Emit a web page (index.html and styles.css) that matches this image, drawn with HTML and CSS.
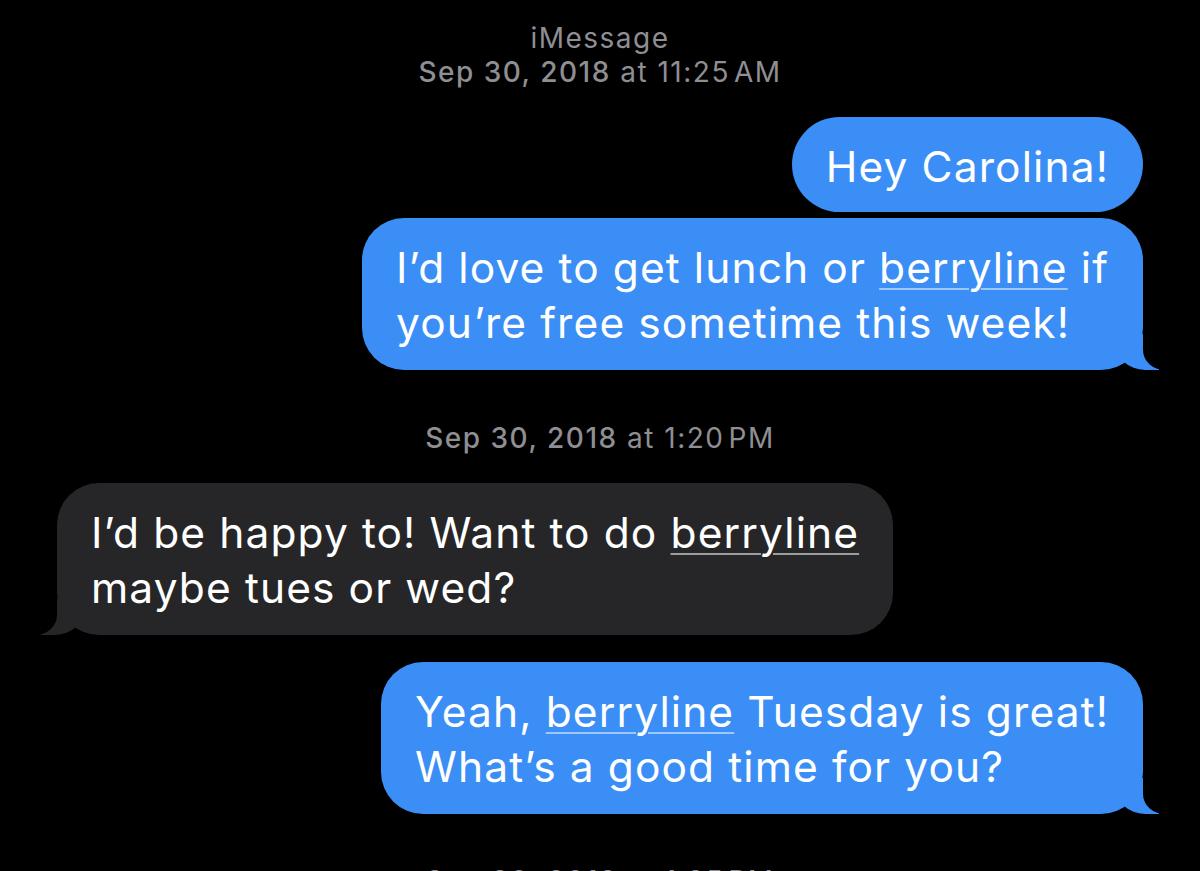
FILE: index.html
```html
<!DOCTYPE html>
<html lang="en">
<head>
<meta charset="utf-8">
<title>iMessage</title>
<link rel="stylesheet" href="styles.css">
</head>
<body>
<main class="thread">
  <header class="stamp stamp-first">
    <div class="service">iMessage</div>
    <div class="time"><span class="date">Sep 30, 2018</span> at 11:25&#8202;AM</div>
  </header>

  <div class="row row-sent">
    <div class="bubble sent single">Hey Carolina!</div>
  </div>
  <div class="row row-sent row-tight">
    <div class="bubble sent tail">I’d love to get lunch or <span class="link">berryline</span> if<br>you’re free sometime this week!</div>
  </div>

  <div class="stamp stamp-mid">
    <div class="time"><span class="date">Sep 30, 2018</span> at 1:20&#8202;PM</div>
  </div>

  <div class="row row-recv">
    <div class="bubble recv tail">I’d be happy to! Want to do <span class="link link-dim">berryline</span><br>maybe tues or wed?</div>
  </div>

  <div class="row row-sent row-gap">
    <div class="bubble sent tail">Yeah, <span class="link">berryline</span> Tuesday is great!<br>What’s a good time for you?</div>
  </div>

  <div class="stamp stamp-last">
    <div class="time"><span class="date">Sep 30, 2018</span> at 1:25&#8202;PM</div>
  </div>
</main>
</body>
</html>
```
FILE: styles.css
```css
* { box-sizing: border-box; }
html, body {
  margin: 0;
  padding: 0;
  background: #000;
  height: 871px;
  overflow: hidden;
}
body {
  font-family: Inter, "Noto Sans", "Liberation Sans", sans-serif;
  color: #fff;
}
.thread {
  display: flex;
  flex-direction: column;
  padding: 21px 57px 0;
}
.stamp {
  text-align: center;
  color: #8e8e93;
  font-size: 28px;
  line-height: 34px;
  letter-spacing: 1.5px;
}
.stamp .date { font-weight: 500; }
.stamp-first { margin-bottom: 28px; }
.stamp-mid { margin: 51px 0 28px; }
.stamp-last { margin-top: 50px; }

.row { display: flex; }
.row-sent { justify-content: flex-end; }
.row-recv { justify-content: flex-start; }
.row-tight { margin-top: 6px; }
.row-gap { margin-top: 27px; }

.bubble {
  position: relative;
  font-size: 42.5px;
  line-height: 55px;
  letter-spacing: 1.1px;
  padding: 22px 34px 20px;
  border-radius: 48px;
  white-space: nowrap;
}
.bubble.single { padding-bottom: 18px; }
.bubble.tail { border-radius: 42px; }
.sent { background: #3a8ef6; }
.recv { background: #262628; }

.link {
  text-decoration: underline;
  text-decoration-color: rgba(255, 255, 255, 0.5);
  text-decoration-thickness: 2px;
  text-underline-offset: 5px;
}
.link-dim { text-decoration-color: rgba(255, 255, 255, 0.55); }

/* tails */
.tail::before,
.tail::after {
  content: "";
  position: absolute;
  bottom: 0;
  height: 36px;
}
.sent.tail::before {
  right: -16px;
  width: 44px;
  background: #3a8ef6;
  border-bottom-left-radius: 30px 28px;
}
.sent.tail::after {
  right: -40px;
  width: 40px;
  background: #000;
  border-bottom-left-radius: 22px 20px;
}
.recv.tail::before {
  left: -16px;
  width: 44px;
  background: #262628;
  border-bottom-right-radius: 30px 28px;
}
.recv.tail::after {
  left: -40px;
  width: 40px;
  background: #000;
  border-bottom-right-radius: 22px 20px;
}
```
